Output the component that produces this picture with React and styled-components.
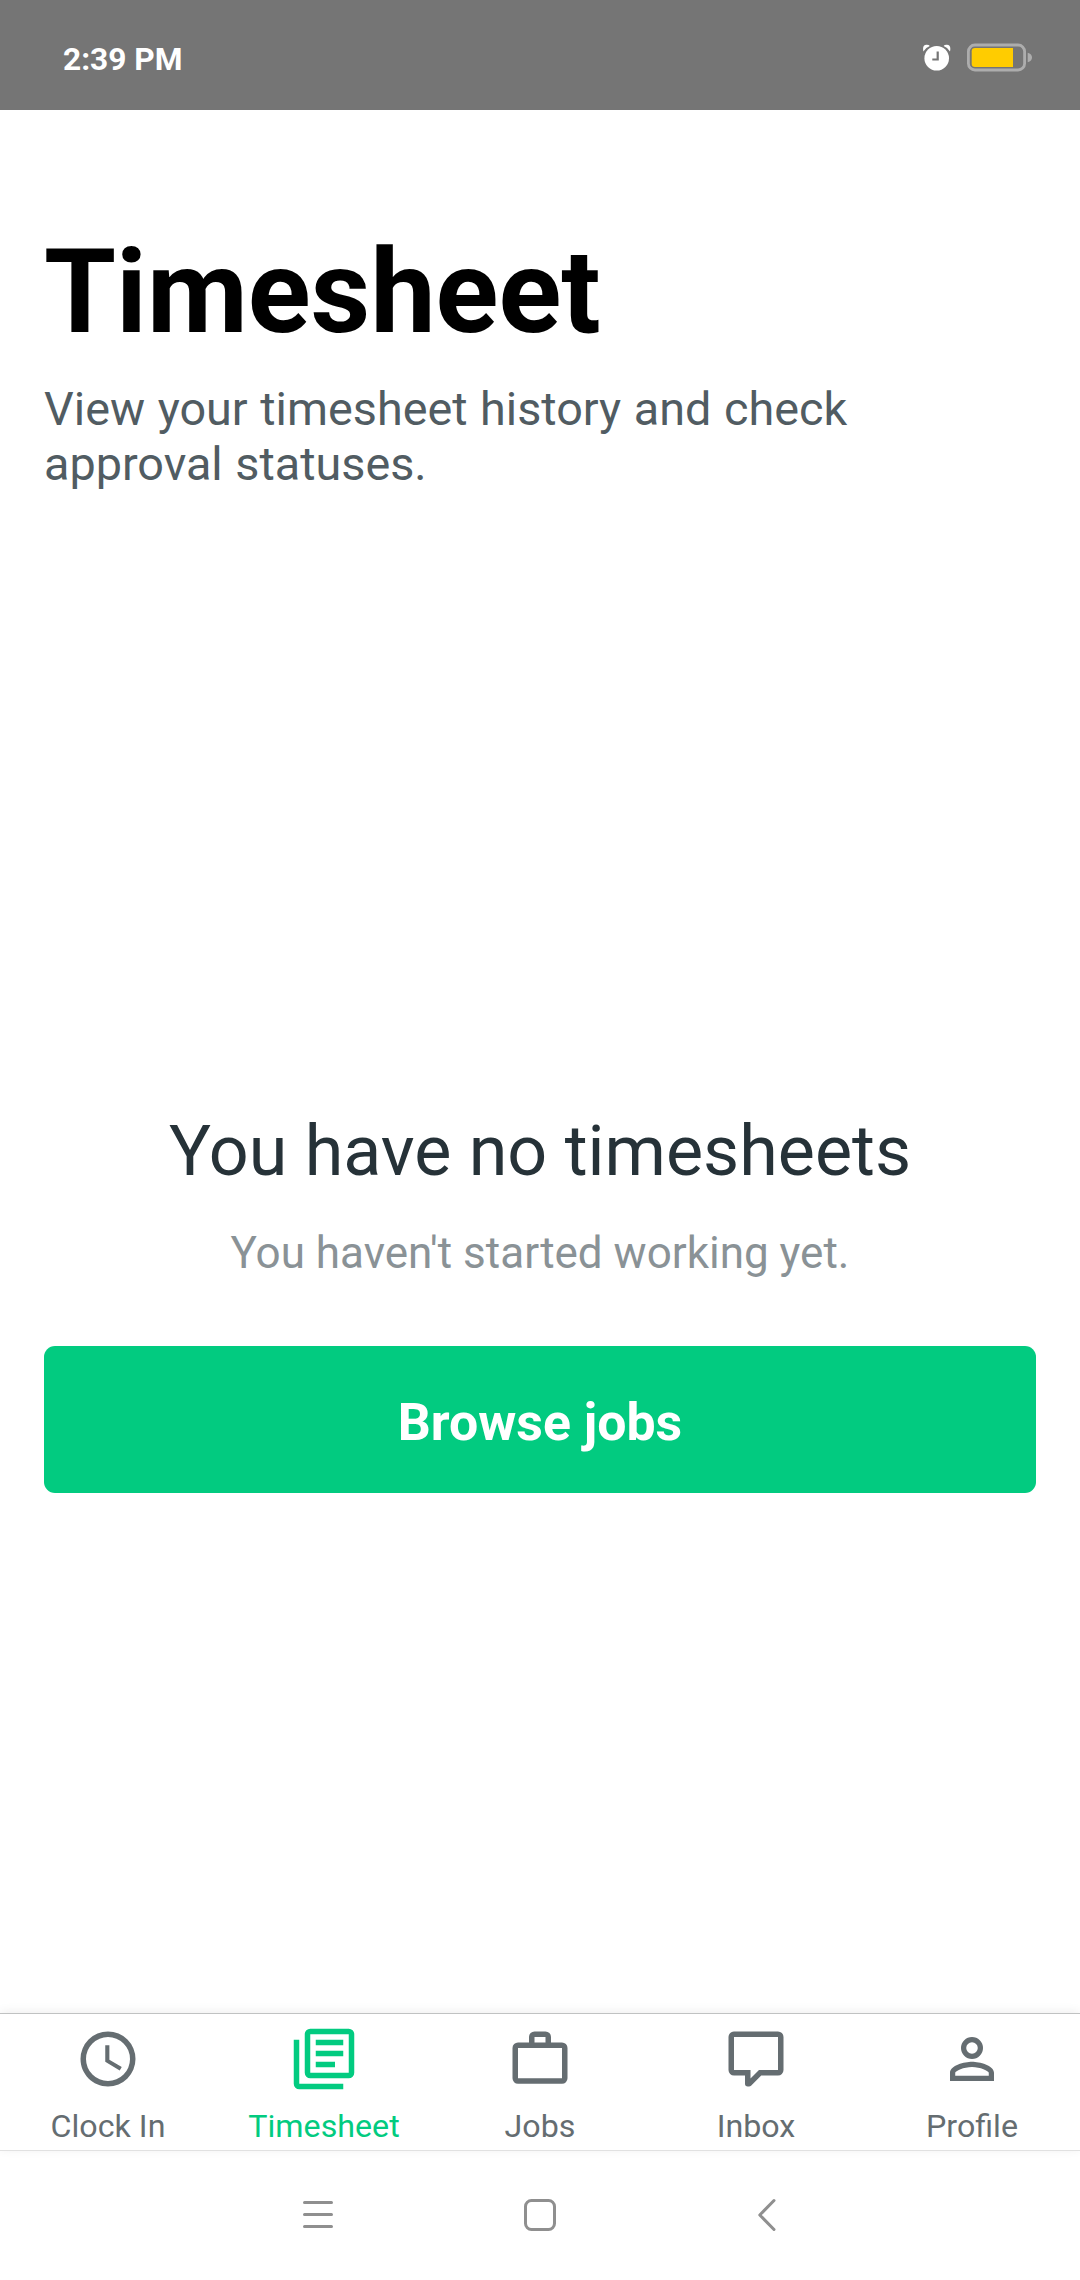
import React from "react";
import styled, { createGlobalStyle } from "styled-components";

const Global = createGlobalStyle`
  * { box-sizing: border-box; }
  html, body { margin: 0; background: #fff; }
  body { font-family: Roboto, "Liberation Sans", sans-serif; }
`;
const Screen = styled.div`
  width: 1080px;
  height: 2280px;
  display: flex;
  flex-direction: column;
  background: #fff;
  overflow: hidden;
`;
const StatusBar = styled.header`
  height: 110px;
  flex: none;
  padding: 5px 47px 0 63px;
  display: flex;
  align-items: center;
  justify-content: space-between;
  background: #757575;
`;
const Time = styled.span`
  margin-top: 4px;
  font-size: 31.7px;
  line-height: 38px;
  font-weight: 700;
  color: #fff;
`;
const StatusIcons = styled.div`
  display: flex;
  align-items: center;
  gap: 16px;
  svg { display: block; }
`;
const Content = styled.main`
  flex: 1;
  padding: 115px 44px 0;
  display: flex;
  flex-direction: column;
`;
const Title = styled.h1`
  margin: 0;
  font-size: 116.4px;
  line-height: 135px;
  font-weight: 700;
  color: #000;
`;
const Subtitle = styled.p`
  margin: 22px 0 0;
  width: 880px;
  font-size: 46.75px;
  line-height: 55px;
  word-spacing: 1px;
  color: #515c62;
`;
const EmptyState = styled.section`
  margin-top: 618px;
  display: flex;
  flex-direction: column;
  align-items: center;
`;
const EmptyTitle = styled.h2`
  margin: 0;
  font-size: 70px;
  line-height: 82px;
  font-weight: 400;
  color: #263238;
  white-space: nowrap;
`;
const EmptyText = styled.p`
  margin: 35px 0 0;
  font-size: 44px;
  line-height: 52px;
  color: #8a9296;
  white-space: nowrap;
`;
const Button = styled.button`
  margin: 67px 0 0;
  width: 100%;
  height: 147px;
  padding: 6px 0 0;
  border: 0;
  border-radius: 11px;
  background: #02cb80;
  color: #fff;
  font: 700 51.8px/60px Roboto, "Liberation Sans", sans-serif;
`;
const TabBar = styled.nav`
  height: 137px;
  flex: none;
  display: flex;
  border-top: 1px solid #c0c2c2;
  box-shadow: 0 -1px 10px rgba(0, 0, 0, 0.08);
`;
const Tab = styled.a`
  flex: 1;
  padding-top: 12px;
  display: flex;
  flex-direction: column;
  align-items: center;
  gap: 15px;
  color: ${(p) => (p.$active ? "#02cb80" : "#656d71")};
  svg { display: block; width: 66px; height: 66px; fill: currentColor; }
`;
const TabLabel = styled.span`
  font-size: 32.2px;
  line-height: 38px;
  white-space: nowrap;
`;
const SystemNav = styled.footer`
  height: 130px;
  flex: none;
  padding-bottom: 1px;
  display: flex;
  border-top: 1px solid #e1e1e1;
  justify-content: center;
  align-items: center;
  gap: 186px;
  svg { display: block; fill: none; stroke: #8f8f8f; stroke-width: 3; stroke-linecap: round; stroke-linejoin: round; }
`;

const tabs = [
  { label: "Clock In", d: "M12,20A8,8 0 0,0 20,12A8,8 0 0,0 12,4A8,8 0 0,0 4,12A8,8 0 0,0 12,20M12,2A10,10 0 0,1 22,12A10,10 0 0,1 12,22C6.47,22 2,17.5 2,12A10,10 0 0,1 12,2M12.5,7V12.25L17,14.92L16.25,16.15L11,13V7H12.5Z" },
  { label: "Timesheet", active: true, d: "M7,1H21A2,2 0 0,1 23,3V17A2,2 0 0,1 21,19H7A2,2 0 0,1 5,17V3A2,2 0 0,1 7,1M7,3V17H21V3H7M9,5H19V7H9V5M9,9H19V11H9V9M9,13H16V15H9V13M1,5H3V21H19V23H3A2,2 0 0,1 1,21V5Z" },
  { label: "Jobs", d: "M10,2H14A2,2 0 0,1 16,4V6H20A2,2 0 0,1 22,8V19A2,2 0 0,1 20,21H4A2,2 0 0,1 2,19V8A2,2 0 0,1 4,6H8V4A2,2 0 0,1 10,2M10,4V6H14V4H10M4,8V19H20V8H4Z" },
  { label: "Inbox", d: "M9,22A1,1 0 0,1 8,21V18H4A2,2 0 0,1 2,16V4C2,2.89 2.9,2 4,2H20A2,2 0 0,1 22,4V16A2,2 0 0,1 20,18H13.9L10.2,21.71C10,21.9 9.75,22 9.5,22V22H9M10,16V19.08L13.08,16H20V4H4V16H10Z" },
  { label: "Profile", d: "M12,13C14.67,13 20,14.33 20,17V20H4V17C4,14.33 9.33,13 12,13M12,4A4,4 0 0,1 16,8A4,4 0 0,1 12,12A4,4 0 0,1 8,8A4,4 0 0,1 12,4M12,14.9C9.03,14.9 5.9,16.36 5.9,17V18.1H18.1V17C18.1,16.36 14.97,14.9 12,14.9M12,5.9A2.1,2.1 0 0,0 9.9,8A2.1,2.1 0 0,0 12,10.1A2.1,2.1 0 0,0 14.1,8A2.1,2.1 0 0,0 12,5.9Z" },
];

export default function App() {
  return (
    <Screen>
      <Global />
      <StatusBar>
        <Time>2:39 PM</Time>
        <StatusIcons>
          <svg width="28" height="29" viewBox="0 0 28 29">
            <g fill="#fff">
              <circle cx="13.7" cy="15.2" r="12.3" />
              <path d="M0.4 8.4Q-1 2 3.5 1.8Q6 1.7 6.8 3Q2.6 4.6 0.4 8.4Z" />
              <path d="M27 8.4Q28.4 2 23.9 1.8Q21.4 1.7 20.6 3Q24.8 4.6 27 8.4Z" />
            </g>
            <path d="M14.7 8.5V16.5H9.3" fill="none" stroke="#757575" strokeWidth="2.2" />
          </svg>
          <svg width="66" height="29" viewBox="0 0 66 29">
            <rect x="1.4" y="2" width="56.2" height="25" rx="6.5" fill="none" stroke="#adadad" strokeWidth="2.8" />
            <path d="M60.7 9.7Q65 11 65 14.5T60.7 19.3Z" fill="#adadad" />
            <path d="M8 5H46V24H8A3.3 3.3 0 0 1 4.7 20.7V8.3A3.3 3.3 0 0 1 8 5Z" fill="#ffcc00" />
          </svg>
        </StatusIcons>
      </StatusBar>
      <Content>
        <Title>Timesheet</Title>
        <Subtitle>View your timesheet history and check approval statuses.</Subtitle>
        <EmptyState>
          <EmptyTitle>You have no timesheets</EmptyTitle>
          <EmptyText>You haven't started working yet.</EmptyText>
          <Button>Browse jobs</Button>
        </EmptyState>
      </Content>
      <TabBar>
        {tabs.map((t) => (
          <Tab key={t.label} $active={t.active}>
            <svg viewBox="0 0 24 24"><path fillRule="evenodd" d={t.d} /></svg>
            <TabLabel>{t.label}</TabLabel>
          </Tab>
        ))}
      </TabBar>
      <SystemNav>
        <svg width="36" height="36" viewBox="0 0 36 36"><path d="M4.5 5.5H31.5M4.5 17.5H31.5M4.5 29.5H31.5" /></svg>
        <svg width="36" height="36" viewBox="0 0 36 36"><rect x="3.5" y="3.5" width="29" height="29" rx="6" /></svg>
        <svg width="36" height="36" viewBox="0 0 36 36"><path d="M30 3.5L15.8 18L30 32.5" /></svg>
      </SystemNav>
    </Screen>
  );
}
